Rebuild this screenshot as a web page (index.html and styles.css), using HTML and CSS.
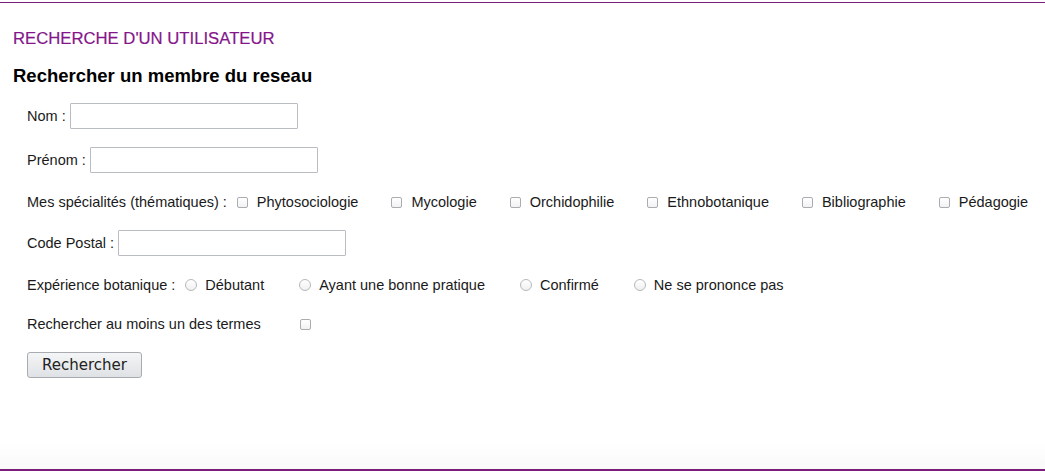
FILE: index.html
```html
<!DOCTYPE html>
<html lang="fr">
<head>
<meta charset="utf-8">
<title>Recherche d'un utilisateur</title>
<link rel="stylesheet" href="styles.css">
</head>
<body>
<div class="panel">
  <h1 class="title">RECHERCHE D'UN UTILISATEUR</h1>
  <h2 class="subtitle">Rechercher un membre du reseau</h2>
  <form class="form">
    <div class="row r1"><label>Nom :</label><input type="text" class="field"></div>
    <div class="row r2"><label>Prénom :</label><input type="text" class="field"></div>
    <div class="row r3">
      <label class="lead">Mes spécialités (thématiques) :</label>
      <span class="opt"><input type="checkbox" class="cb"><span>Phytosociologie</span></span>
      <span class="opt"><input type="checkbox" class="cb"><span>Mycologie</span></span>
      <span class="opt"><input type="checkbox" class="cb"><span>Orchidophilie</span></span>
      <span class="opt"><input type="checkbox" class="cb"><span>Ethnobotanique</span></span>
      <span class="opt"><input type="checkbox" class="cb"><span>Bibliographie</span></span>
      <span class="opt"><input type="checkbox" class="cb"><span>Pédagogie</span></span>
    </div>
    <div class="row r4"><label>Code Postal :</label><input type="text" class="field"></div>
    <div class="row r5">
      <label class="lead">Expérience botanique :</label>
      <span class="opt ropt"><input type="radio" name="exp" class="rd"><span>Débutant</span></span>
      <span class="opt ropt"><input type="radio" name="exp" class="rd"><span>Ayant une bonne pratique</span></span>
      <span class="opt ropt"><input type="radio" name="exp" class="rd"><span>Confirmé</span></span>
      <span class="opt ropt"><input type="radio" name="exp" class="rd"><span>Ne se prononce pas</span></span>
    </div>
    <div class="row r6">
      <label class="lead wide">Rechercher au moins un des termes</label>
      <input type="checkbox" class="cb">
    </div>
    <div class="row btnrow"><button type="button" class="btn">Rechercher</button></div>
  </form>
</div>
</body>
</html>
```

FILE: styles.css
```css
html, body {
  margin: 0;
  padding: 0;
  background: #ffffff;
}
body {
  font-family: "Liberation Sans", Arial, sans-serif;
  color: #1a1a1a;
}
.panel {
  margin-top: 2px;
  height: 466px;
  border-top: 1px solid #7a1e7a;
  border-bottom: 2px solid #7a1e7a;
  background: linear-gradient(to bottom, #ffffff 0, #ffffff 440px, #f9f9f9 466px);
  padding: 0 13px;
  box-sizing: content-box;
}
.title {
  margin: 0;
  padding-top: 27px;
  font-size: 16.7px;
  font-weight: normal;
  color: #84168a;
  line-height: 17px;
  -webkit-text-stroke: 0.2px #84168a;
}
.subtitle {
  margin: 19px 0 0;
  font-size: 18.5px;
  font-weight: bold;
  color: #000;
  line-height: 20px;
}
.form {
  margin-top: 17px;
  padding-left: 14px;
  font-size: 14.5px;
}
.row {
  display: flex;
  align-items: center;
  height: 26px;
  margin-bottom: 16px;
  white-space: nowrap;
}
.row > * {
  flex-shrink: 0;
}
.r1 { margin-bottom: 18px; }
.r2 { margin-bottom: 16px; }
.r3 { margin-bottom: 15px; }
.r4 { margin-bottom: 16px; }
.r5 { margin-bottom: 13px; }
.r6 { margin-bottom: 15px; }
.row label {
  margin-right: 4px;
}
.row .lead {
  margin-right: 10px;
}
.row .wide {
  margin-right: 39px;
}
.field {
  width: 228px;
  height: 26px;
  box-sizing: border-box;
  border: 1px solid #b9bcc0;
  border-radius: 1px;
  margin: 0;
  padding: 2px 4px;
  background: #fff;
}
.opt {
  display: inline-flex;
  align-items: center;
  margin-right: 33px;
}
.ropt {
  margin-right: 35px;
}
.opt:last-child {
  margin-right: 0;
}
.cb {
  appearance: none;
  -webkit-appearance: none;
  width: 11px;
  height: 11px;
  margin: 0 9px 0 0;
  border: 1px solid #a9acb0;
  border-radius: 2px;
  background: linear-gradient(#fff, #f2f2f2);
  box-sizing: border-box;
}
.rd {
  appearance: none;
  -webkit-appearance: none;
  width: 12px;
  height: 12px;
  margin: 0 8px 0 0;
  border: 1px solid #b5b8bc;
  border-radius: 50%;
  background: linear-gradient(#fff, #f0f0f0);
  box-sizing: border-box;
}
.btn {
  width: 115px;
  height: 26px;
  padding: 0;
  font-family: "DejaVu Sans", sans-serif;
  font-size: 15px;
  color: #222;
  border: 1px solid #a8acb0;
  border-radius: 3px;
  background: linear-gradient(#f4f5f6, #dfe2e5);
}
```
